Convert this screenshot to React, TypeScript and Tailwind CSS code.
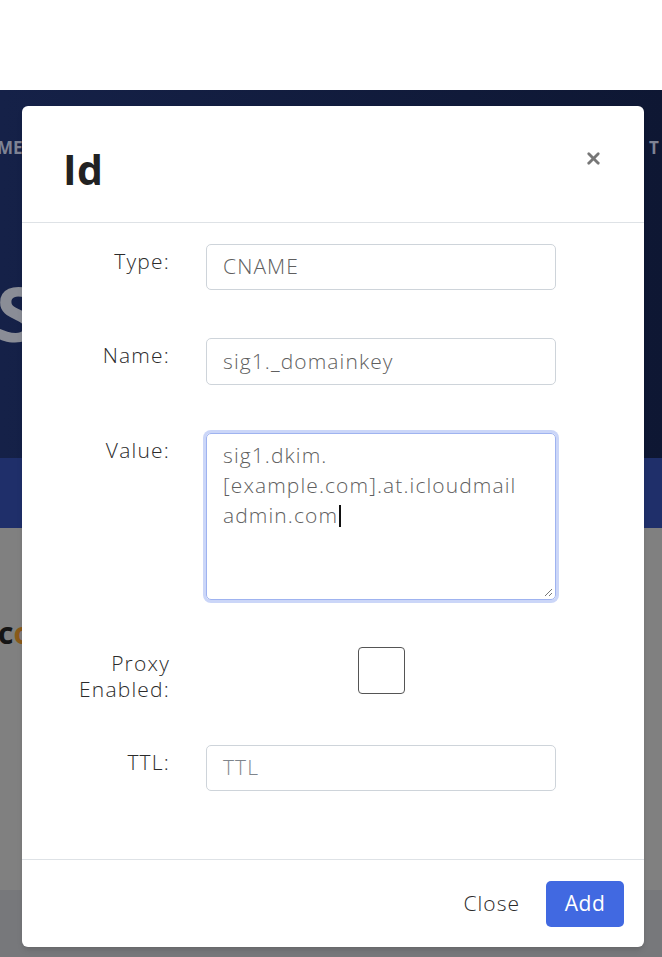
import { X } from 'lucide-react'

const font = "font-['Open_Sans','Liberation_Sans',sans-serif]"

function Field({ label, children, h, mt }: { label: React.ReactNode; children: React.ReactNode; h: string; mt: string }) {
  return (
    <div className={`flex ${h} ${mt}`}>
      <div className="w-[148px] shrink-0 pt-[3px] text-right text-[21px] font-light leading-[28px] tracking-[1.2px] text-[#2b2b2b]">{label}</div>
      <div className="ml-[36px] w-[350px]">{children}</div>
    </div>
  )
}

function TextInput({ value, placeholder }: { value?: string; placeholder?: string }) {
  return (
    <div className="flex h-full items-center rounded-[5px] border border-[#ced4da] pl-[16px] text-[21px] font-light tracking-[1.1px] text-[#5f5f5f]">
      {value ?? <span className="text-[#7f858c]">{placeholder}</span>}
    </div>
  )
}

export default function App() {
  return (
    <div className={`relative h-[957px] w-[662px] overflow-hidden ${font}`}>
      {/* page behind the backdrop */}
      <div className="h-[90px] bg-white" />
      <div className="flex h-[368px] flex-col bg-gradient-to-r from-[#152148] to-[#0e1733]">
        <div className="mt-[45px] flex justify-between text-[17px] font-bold text-[#7e8394]">
          <span className="-ml-[3px]">ME</span>
          <span className="-mr-[6px]">T .</span>
        </div>
        <div className="-ml-[4px] mt-[114px] text-[76px] font-bold leading-none text-[#8a8d96]">S</div>
      </div>
      <div className="h-[70px] bg-[#1f2f6a]" />
      <div className="h-[362px] bg-[#808080] pt-[82px]">
        <span className="-ml-[2px] text-[30px] font-bold text-[#151515]">c<span className="text-[#8a5a1a]">o</span></span>
      </div>
      <div className="h-[67px] bg-[#77787b]" />

      {/* modal */}
      <div className="absolute left-[22px] top-[106px] flex h-[841px] w-[622px] flex-col rounded-[6px] bg-white shadow-md">
        <div className="flex h-[117px] shrink-0 items-start justify-between border-b border-[#dee2e6] pl-[41px] pr-[41px] pt-[38px]">
          <h2 className="text-[41px] font-bold leading-[50px] tracking-[0.5px] text-[#222]">Id</h2>
          <X className="mt-[5px] h-[19px] w-[19px] text-[#777]" strokeWidth={3.5} />
        </div>

        <div className="flex-1">
          <Field label="Type:" h="h-[46px]" mt="mt-[21px]">
            <TextInput value="CNAME" />
          </Field>
          <Field label="Name:" h="h-[47px]" mt="mt-[48px]">
            <TextInput value="sig1._domainkey" />
          </Field>
          <Field label="Value:" h="h-[167px]" mt="mt-[48px]">
            <div className="relative h-full rounded-[5px] border border-[#9fb3f0] pl-[16px] pt-[6px] text-[21px] font-light leading-[30px] tracking-[1.1px] text-[#5f5f5f] shadow-[0_0_0_3px_#cbd6f8]">
              <div>sig1.dkim.</div>
              <div>[example.com].at.icloudmail</div>
              <div>
                admin.com<span className="ml-[1px] inline-block h-[22px] w-[2px] translate-y-[4px] bg-[#111]" />
              </div>
              <svg className="absolute bottom-[2px] right-[2px]" width="10" height="10" viewBox="0 0 10 10">
                <path d="M9 2 L2 9 M9 6 L6 9" stroke="#777" strokeWidth="1" />
              </svg>
            </div>
          </Field>
          <div className="mt-[47px] flex h-[47px]">
            <div className="w-[148px] shrink-0 pt-[3px] text-right text-[21px] font-light leading-[26px] tracking-[1.2px] text-[#2b2b2b]">
              Proxy
              <br />
              Enabled:
            </div>
            <div className="ml-[36px] flex w-[350px] justify-center">
              <div className="h-[47px] w-[47px] rounded-[4px] border-[1.5px] border-[#555]" />
            </div>
          </div>
          <Field label="TTL:" h="h-[46px]" mt="mt-[51px]">
            <TextInput placeholder="TTL" />
          </Field>
        </div>

        <div className="flex h-[88px] shrink-0 items-center justify-end border-t border-[#dee2e6] pr-[20px]">
          <button type="button" className="mr-[26px] text-[21px] font-light tracking-[1px] text-[#2b2b2b]">
            Close
          </button>
          <button type="button" className="h-[46px] w-[78px] rounded-[5px] bg-[#4169e1] text-[21px] tracking-[0.5px] text-white">
            Add
          </button>
        </div>
      </div>
    </div>
  )
}
